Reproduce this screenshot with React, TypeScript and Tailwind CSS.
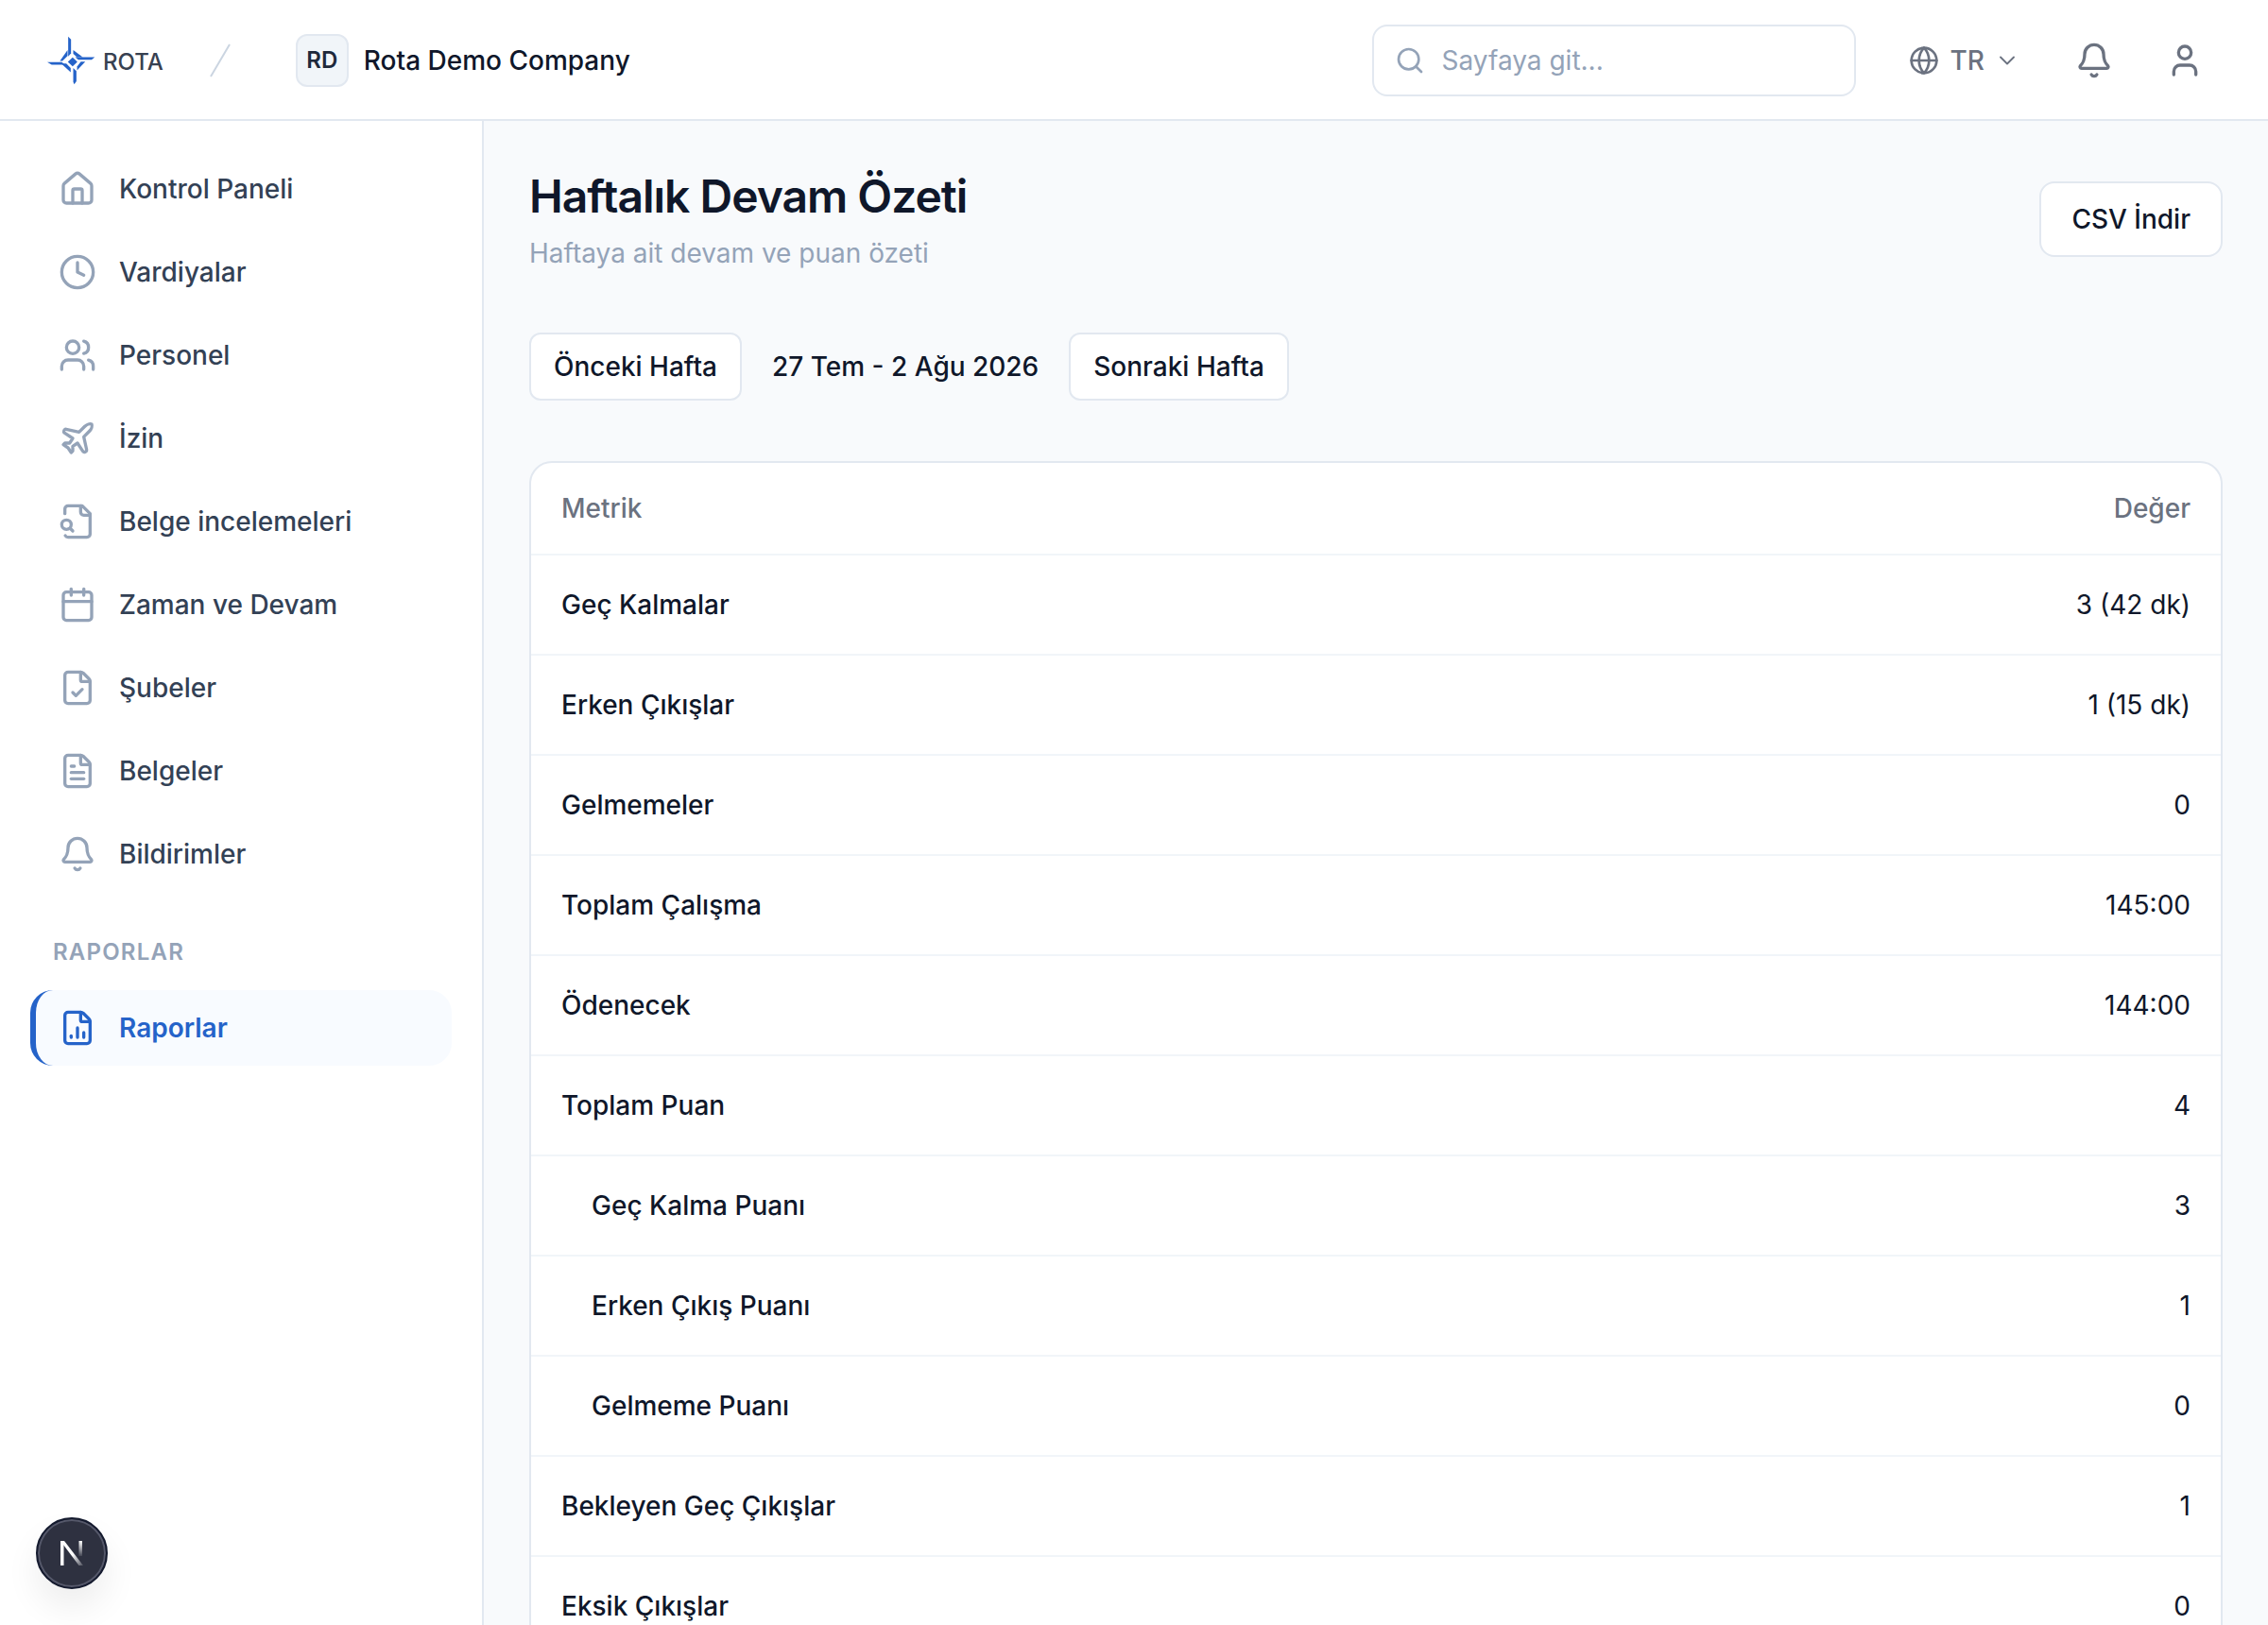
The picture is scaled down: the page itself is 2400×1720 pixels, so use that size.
import {
	Bell,
	Calendar,
	ChevronDown,
	Clock,
	FileChartColumn,
	FileCheck,
	FileText,
	Globe,
	House,
	Plane,
	Search,
	User,
	Users,
} from "lucide-react";
import type { ComponentType } from "react";

type IconType = ComponentType<{ className?: string; strokeWidth?: number }>;

// lucide's current file-search puts the lens inside the page, the reference has it on the corner
function FileLens({ className, strokeWidth }: { className?: string; strokeWidth?: number }) {
	return (
		<svg
			viewBox="0 0 24 24"
			fill="none"
			stroke="currentColor"
			strokeWidth={strokeWidth}
			strokeLinecap="round"
			strokeLinejoin="round"
			className={className}
		>
			<path d="M14 2v4a2 2 0 0 0 2 2h4" />
			<path d="M4.268 21a2 2 0 0 0 1.727 1H18a2 2 0 0 0 2-2V7l-5-5H6a2 2 0 0 0-2 2v3" />
			<path d="m9 18-1.5-1.5" />
			<circle cx="5" cy="14" r="3" />
		</svg>
	);
}

const navItems: { label: string; icon: IconType }[] = [
	{ label: "Kontrol Paneli", icon: House },
	{ label: "Vardiyalar", icon: Clock },
	{ label: "Personel", icon: Users },
	{ label: "İzin", icon: Plane },
	{ label: "Belge incelemeleri", icon: FileLens },
	{ label: "Zaman ve Devam", icon: Calendar },
	{ label: "Şubeler", icon: FileCheck },
	{ label: "Belgeler", icon: FileText },
	{ label: "Bildirimler", icon: Bell },
];

const rows: { label: string; value: string; indent?: boolean }[] = [
	{ label: "Geç Kalmalar", value: "3 (42 dk)" },
	{ label: "Erken Çıkışlar", value: "1 (15 dk)" },
	{ label: "Gelmemeler", value: "0" },
	{ label: "Toplam Çalışma", value: "145:00" },
	{ label: "Ödenecek", value: "144:00" },
	{ label: "Toplam Puan", value: "4" },
	{ label: "Geç Kalma Puanı", value: "3", indent: true },
	{ label: "Erken Çıkış Puanı", value: "1", indent: true },
	{ label: "Gelmeme Puanı", value: "0", indent: true },
	{ label: "Bekleyen Geç Çıkışlar", value: "1" },
	{ label: "Eksik Çıkışlar", value: "0" },
];

function Logo() {
	return (
		<svg viewBox="30 25 152 155" className="h-[52px] w-[51px]" fill="#2563c9">
			{/* arms */}
			<path d="M96 27 L105 36 L105 80 L96 90 Z" />
			<path d="M112 126 L122 136 L122 168 L115 178 L112 170 Z" />
			<path d="M30 108 L76 108 L86 116 L44 116 Z" />
			<path d="M180 92 L170 100 L128 100 L118 92 Z" />
			{/* wings */}
			<path d="M94 70 L94 88 L78 104 L70 104 Z" />
			<path d="M112 70 L142 92 L124 92 L112 82 Z" />
			<path d="M74 112 L90 112 L104 126 L104 140 Z" />
			<path d="M150 106 L124 134 L124 122 L136 106 Z" />
			{/* center diamond */}
			<path d="M110 93 L125 107 L110 121 L95 107 Z" />
		</svg>
	);
}

function Header() {
	return (
		<header className="flex h-[128px] shrink-0 items-center border-b-2 border-[#e2e8f0] bg-white pl-[50px] pr-[68px] pt-[2px]">
			<div className="flex items-center gap-[8px]">
				<Logo />
				<span className="mt-[4px] text-[24px] font-medium text-[#374151]">ROTA</span>
			</div>
			<svg viewBox="0 0 22 36" className="ml-[49px] h-[36px] w-[22px]">
				<line x1="21" y1="1" x2="1" y2="35" stroke="#cbd5e1" strokeWidth="2" />
			</svg>
			<div className="ml-[69px] flex h-[56px] w-[56px] items-center justify-center rounded-[12px] border-2 border-[#e2e8f0] bg-[#f1f5f9] text-[24px] font-semibold text-[#1e293b]">
				RD
			</div>
			<span className="ml-[16px] text-[28px] font-medium text-[#0f172a]">
				Rota Demo Company
			</span>
			<div className="ml-auto flex h-[76px] w-[512px] items-center gap-[18px] rounded-[16px] border-2 border-[#e2e8f0] bg-white px-[22px]">
				<Search className="h-[32px] w-[32px] text-[#94a3b8]" strokeWidth={2} />
				<span className="text-[28px] text-[#94a3b8]">Sayfaya git...</span>
			</div>
			<div className="ml-[56px] flex items-center text-[#6b7280]">
				<Globe className="h-[32px] w-[32px]" strokeWidth={2} />
				<span className="ml-[12px] text-[28px] font-medium">TR</span>
				<ChevronDown className="ml-[10px] h-[28px] w-[28px]" strokeWidth={1.6} />
			</div>
			<Bell className="ml-[58px] h-[40px] w-[40px] text-[#6b7280]" strokeWidth={2} />
			<User className="ml-[56px] h-[40px] w-[40px] text-[#6b7280]" strokeWidth={2} />
		</header>
	);
}

function NavRow({ label, icon: Icon, active }: { label: string; icon: IconType; active?: boolean }) {
	return (
		<div
			className={
				active
					? "flex h-[80px] items-center gap-[24px] rounded-[24px] border-l-[6px] border-[#2563c9] bg-[#f8fbff] pl-[24px] text-[28px] font-semibold text-[#2563c9]"
					: "flex h-[80px] items-center gap-[24px] pl-[30px] text-[28px] font-medium text-[#334155]"
			}
		>
			<Icon
				className={active ? "h-[40px] w-[40px] text-[#2563c9]" : "h-[40px] w-[40px] text-[#94a3b8]"}
				strokeWidth={2}
			/>
			<span>{label}</span>
		</div>
	);
}

function Sidebar() {
	return (
		<aside className="relative w-[512px] shrink-0 border-r-2 border-[#e2e8f0] bg-white px-[32px] pt-[32px]">
			<nav className="flex flex-col gap-[8px]">
				{navItems.map((item) => (
					<NavRow key={item.label} label={item.label} icon={item.icon} />
				))}
			</nav>
			<div className="mb-[24px] mt-[48px] pl-[24px] text-[24px] font-semibold leading-[32px] tracking-[1.2px] text-[#94a3b8]">
				RAPORLAR
			</div>
			<NavRow label="Raporlar" icon={FileChartColumn} active />

			{/* dev tools badge */}
			<div className="absolute left-[38px] top-[1478px] flex h-[76px] w-[76px] items-center justify-center rounded-full border-2 border-[#141a2e] bg-[#2e3140] shadow-[inset_0_0_0_2px_#55586a,0_20px_36px_rgba(0,0,0,0.07)]">
				<svg viewBox="0 0 26 28" className="h-[28px] w-[26px]">
					<defs>
						<linearGradient id="n-diag" x1="0" y1="0" x2="1" y2="1">
							<stop offset="0.55" stopColor="#ffffff" />
							<stop offset="1" stopColor="#ffffff" stopOpacity="0.15" />
						</linearGradient>
						<linearGradient id="n-stem" x1="0" y1="0" x2="0" y2="1">
							<stop offset="0" stopColor="#ffffff" />
							<stop offset="1" stopColor="#ffffff" stopOpacity="0.1" />
						</linearGradient>
					</defs>
					<path d="M1 27 V1 H4.5 V27 Z" fill="#ffffff" />
					<path d="M1 1 H5 L25 27 H20.5 Z" fill="url(#n-diag)" />
					<rect x="20.5" y="1" width="3.5" height="16" fill="url(#n-stem)" />
				</svg>
			</div>
		</aside>
	);
}

function OutlineButton({ children }: { children: string }) {
	return (
		<button className="flex h-[72px] items-center rounded-[12px] border-2 border-[#e2e8f0] bg-white px-[24px] text-[28px] font-medium text-[#0f172a]">
			{children}
		</button>
	);
}

export default function App() {
	return (
		<div className="flex h-[1720px] flex-col overflow-hidden bg-[#f8fafc] font-['Inter',sans-serif]">
			<Header />
			<div className="flex min-h-0 flex-1">
				<Sidebar />
				<main className="min-w-0 flex-1 overflow-hidden px-[48px] pt-[48px]">
					<div className="flex items-start justify-between">
						<div>
							<h1 className="text-[48px] font-semibold leading-[64px] tracking-[-1px] text-[#0f172a]">
								Haftalık Devam Özeti
							</h1>
							<p className="mt-[8px] text-[28px] leading-[40px] text-[#94a3b8]">
								Haftaya ait devam ve puan özeti
							</p>
						</div>
						<button className="mt-[16px] flex h-[80px] items-center rounded-[16px] border-2 border-[#e2e8f0] bg-white px-[32px] text-[28px] font-medium text-[#0f172a]">
							CSV İndir
						</button>
					</div>

					<div className="mt-[64px] flex items-center gap-[32px]">
						<OutlineButton>Önceki Hafta</OutlineButton>
						<span className="text-[28px] font-medium text-[#0f172a]">27 Tem - 2 Ağu 2026</span>
						<OutlineButton>Sonraki Hafta</OutlineButton>
					</div>

					<div className="mt-[64px] overflow-hidden rounded-[24px] border-2 border-[#e2e8f0] bg-white">
						<div className="flex h-[98px] items-center justify-between border-b-2 border-[#f1f5f9] px-[32px] text-[28px] font-medium text-[#6b7280]">
							<span>Metrik</span>
							<span>Değer</span>
						</div>
						{rows.map((row) => (
							<div
								key={row.label}
								className="flex h-[106px] items-center justify-between border-b-2 border-[#f1f5f9] px-[32px] text-[28px] text-[#0f172a]"
							>
								<span className={row.indent ? "pl-[32px] font-medium" : "font-medium"}>{row.label}</span>
								<span>{row.value}</span>
							</div>
						))}
					</div>
				</main>
			</div>
		</div>
	);
}
